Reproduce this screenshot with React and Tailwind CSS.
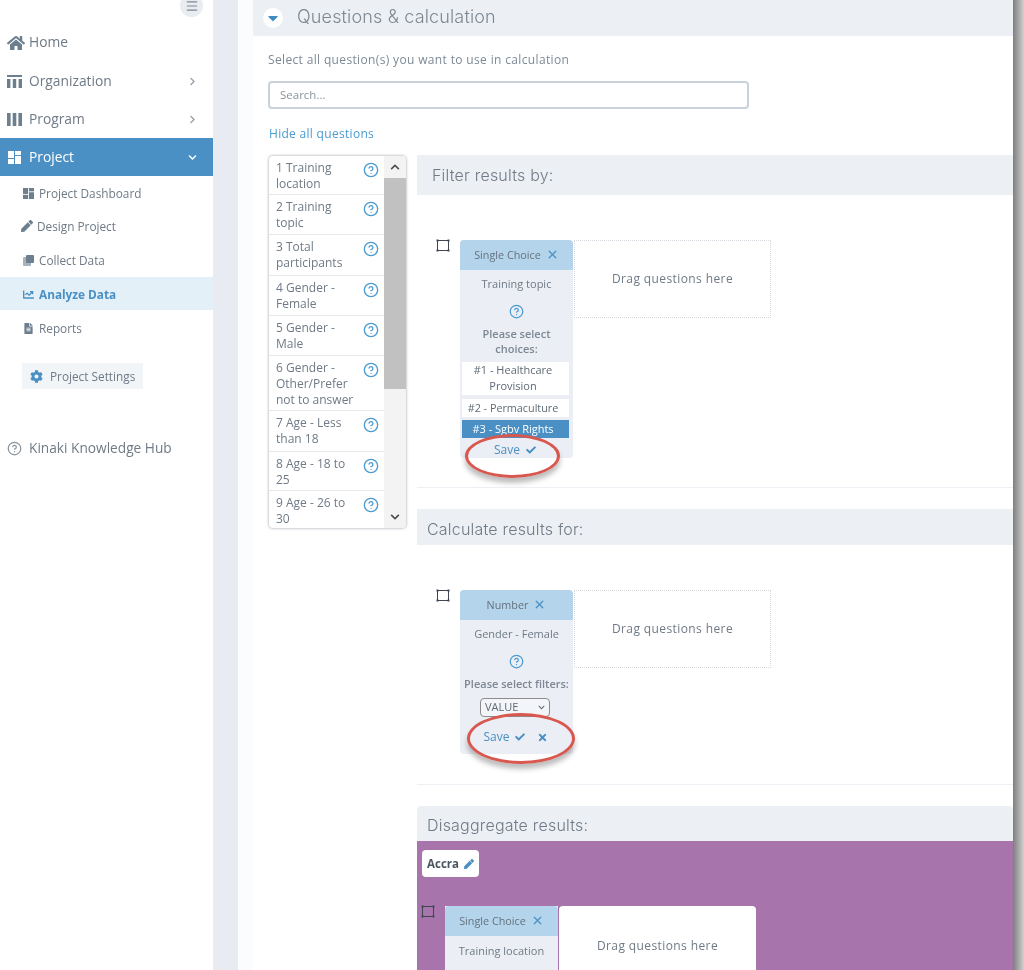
import React from 'react'
import { FaHome, FaPen, FaCog, FaCheck, FaTimes, FaChartLine, FaFileAlt, FaCaretDown, FaChevronRight, FaChevronDown, FaChevronUp } from 'react-icons/fa'
import { CircleHelp, X, Menu } from 'lucide-react'

function OrgIcon() {
  return (
    <svg width="15" height="13" viewBox="0 0 15 13" fill="currentColor">
      <rect x="0" y="0" width="15" height="2" />
      <rect x="0" y="4" width="3.4" height="9" />
      <rect x="5.8" y="4" width="3.4" height="9" />
      <rect x="11.6" y="4" width="3.4" height="9" />
    </svg>
  )
}

function ProgramIcon() {
  return (
    <svg width="15" height="13" viewBox="0 0 15 13" fill="currentColor">
      <rect x="0" y="0" width="3.6" height="13" />
      <rect x="5.7" y="0" width="3.6" height="13" />
      <rect x="11.4" y="0" width="3.6" height="13" />
    </svg>
  )
}

function TilesIcon({ size = 13 }) {
  return (
    <svg width={size} height={size} viewBox="0 0 13 13" fill="currentColor">
      <rect x="0" y="0" width="6" height="7" />
      <rect x="7" y="0" width="6" height="4" />
      <rect x="7" y="5" width="6" height="8" />
      <rect x="0" y="8" width="6" height="5" />
    </svg>
  )
}

function CollectIcon() {
  return (
    <svg width="11" height="11" viewBox="0 0 11 11" fill="currentColor">
      <rect x="0" y="2" width="8" height="9" rx="1" fillOpacity="0.6" />
      <rect x="3" y="0" width="8" height="8" rx="1" />
    </svg>
  )
}

function CornerIcon() {
  return (
    <svg width="14" height="13" viewBox="0 0 14 13" fill="none" className="-mt-px shrink-0 text-[#3f4650]">
      <rect x="1.5" y="1.5" width="11" height="10" stroke="currentColor" strokeWidth="1" />
      <rect x="0.5" y="0.5" width="2" height="2" fill="currentColor" />
      <rect x="11.5" y="0.5" width="2" height="2" fill="currentColor" />
      <rect x="0.5" y="10.5" width="2" height="2" fill="currentColor" />
      <rect x="11.5" y="10.5" width="2" height="2" fill="currentColor" />
    </svg>
  )
}

function NavRow({ icon, label, chevron }) {
  return (
    <div className="flex h-[38px] items-center pl-[7px] pr-4 pt-px text-[13.8px] text-[#6f7a86]">
      <span className="flex w-[22px] justify-start text-[#6d7f8e]">{icon}</span>
      <span className="flex-1">{label}</span>
      {chevron && <FaChevronRight className="text-[9px] text-[#9aa4ae]" />}
    </div>
  )
}

function SubRow({ icon, label, active, iconWidth = 'w-[16px]', className = 'pt-[2px]' }) {
  return (
    <div className={`flex h-[33.6px] items-center pl-[23px] text-[11.8px] ${className} ${active ? 'bg-[#e3f0f8] font-bold text-[#4a90c4]' : 'text-[#6f7a86]'}`}>
      <span className={`flex ${iconWidth} ${active ? 'text-[#4a90c4]' : 'text-[#6d7f8e]'}`}>{icon}</span>
      {label}
    </div>
  )
}

function Sidebar() {
  return (
    <aside className="relative w-[213px] shrink-0 bg-white">
      <div className="absolute -top-[6px] left-[180px] flex h-[23px] w-[23px] items-center justify-center rounded-full bg-[#e9edf2] text-[#7d8791]">
        <Menu size={14} />
      </div>
      <div className="h-[23px]" />
      <NavRow icon={<FaHome className="text-lg" />} label="Home" />
      <div className="h-px" />
      <NavRow icon={<OrgIcon />} label="Organization" chevron />
      <NavRow icon={<ProgramIcon />} label="Program" chevron />
      <div className="flex h-[38px] items-center bg-[#4a90c4] pl-[8px] pr-4 pt-px text-[13.8px] text-white">
        <span className="flex w-[21px]"><TilesIcon /></span>
        <span className="flex-1">Project</span>
        <FaChevronDown className="text-[9px]" />
      </div>
      <SubRow icon={<TilesIcon size={11} />} label="Project Dashboard" />
      <SubRow icon={<FaPen className="-ml-[2px] text-xs" />} label="Design Project" iconWidth="w-[14px]" className="pt-0" />
      <SubRow icon={<CollectIcon />} label="Collect Data" />
      <SubRow icon={<FaChartLine className="text-[11px]" />} label="Analyze Data" active />
      <SubRow icon={<FaFileAlt className="text-[11px]" />} label="Reports" className="pt-[3px]" />
      <div className="ml-[22px] mt-[19px] flex h-[26px] w-[121px] items-center gap-[7px] bg-[#f2f5f8] pl-2 pt-[2px] text-[11.8px] text-[#6f7a86]">
        <FaCog className="text-[13px] text-[#4a90c4]" />
        Project Settings
      </div>
      <div className="mt-[45px] flex h-[28px] items-center gap-[7px] pl-[7px] pt-px text-[13.7px] text-[#6f7a86]">
        <CircleHelp size={15} className="text-[#8a949e]" />
        Kinaki Knowledge Hub
      </div>
    </aside>
  )
}

const questions = [
  ['1 Training location', 39],
  ['2 Training topic', 40],
  ['3 Total participants', 41],
  ['4 Gender - Female', 40],
  ['5 Gender - Male', 40],
  ['6 Gender - Other/Prefer not to answer', 55],
  ['7 Age - Less than 18', 41],
  ['8 Age - 18 to 25', 39],
  ['9 Age - 26 to 30', 37],
]

function QuestionList() {
  return (
    <div className="mt-px flex h-[372px] w-[137px] shrink-0 overflow-hidden rounded-sm bg-white shadow-[0_0_3px_rgba(60,70,90,0.55)]">
      <div className="w-[115px] shrink-0">
        {questions.map(([label, height]) => (
          <div
            key={label}
            style={{ height }}
            className="flex items-start justify-between overflow-hidden border-b border-[#e6e8ec] pl-[7px] pr-[5px] pt-[4px] text-xs leading-[16px] text-[#6f7a86] last:border-b-0"
          >
            <span className="w-[82px]">{label}</span>
            <CircleHelp size={16} className="mt-[2px] shrink-0 text-[#4a9bd0]" />
          </div>
        ))}
      </div>
      <div className="flex w-[22px] flex-col items-center bg-[#f3f3f3]">
        <div className="flex h-[22px] w-full items-center justify-center text-[#4d4d4d]">
          <FaChevronUp className="text-[10px]" />
        </div>
        <div className="h-[211px] w-full bg-[#c1c1c1]" />
        <div className="flex-1" />
        <div className="flex h-[22px] w-full items-center justify-center text-[#4d4d4d]">
          <FaChevronDown className="text-[10px]" />
        </div>
      </div>
    </div>
  )
}

function CardHeader({ label }) {
  return (
    <div className="flex h-[29.5px] items-center justify-center gap-[5px] rounded-t-sm bg-[#b3d4ea] text-[10.8px] text-[#65727f]">
      {label}
      <X size={13} strokeWidth={2.4} className="text-[#4a90c4]" />
    </div>
  )
}

function RedRing({ className }) {
  return (
    <div className={`absolute rounded-[50%] border-[3px] border-[#d8584f] shadow-[0_5px_5px_rgba(90,90,90,0.4)] ${className}`} />
  )
}

function FilterCard() {
  return (
    <div className="relative h-[218px] w-[113px] shrink-0 rounded-sm bg-[#ebeef4] text-center text-[11px] text-[#6f7a86]">
      <CardHeader label="Single Choice" />
      <div className="mt-[6px] leading-[16px]">Training topic</div>
      <CircleHelp size={15} className="mx-auto mt-[12px] text-[#4a9bd0]" />
      <div className="mt-[7px] font-semibold leading-[15px] text-[#7d8894]">Please select<br />choices:</div>
      <div className="ml-[2px] mt-[6px] h-[33px] w-[107px] bg-white pr-[5px] leading-[16px] text-[#5f6a75]">#1 - Healthcare Provision</div>
      <div className="ml-[2px] mt-[4px] h-[18px] w-[107px] bg-white pr-[5px] text-[10.8px] leading-[18px] text-[#5f6a75]">#2 - Permaculture</div>
      <div className="ml-[2px] mt-[3px] h-[18px] w-[107px] bg-[#4a90c4] pr-[5px] leading-[18px] text-white">#3 - Sgbv Rights</div>
      <div className="mt-[4px] flex h-[16px] items-center justify-center gap-[6px] pr-[3px] text-xs text-[#4a90c4]">
        Save <FaCheck className="text-[10px]" />
      </div>
      <RedRing className="left-[5px] top-[194px] h-[44px] w-[95px]" />
    </div>
  )
}

function NumberCard() {
  return (
    <div className="relative h-[164px] w-[113px] shrink-0 rounded-sm bg-[#ebeef4] text-center text-[11px] text-[#6f7a86]">
      <CardHeader label="Number" />
      <div className="mt-[6px] leading-[16px]">Gender - Female</div>
      <CircleHelp size={15} className="mx-auto mt-[12px] text-[#4a9bd0]" />
      <div className="mt-[7px] whitespace-nowrap font-semibold leading-[15px] text-[#7d8894]">Please select filters:</div>
      <div className="ml-[20px] mt-[7.5px] flex h-[19px] w-[70px] items-center justify-between rounded border border-[#8c8c8c] bg-white/40 pl-[4px] pr-[4px] text-[#5f6a75]">
        VALUE <FaChevronDown className="text-[7px]" />
      </div>
      <div className="mt-[12px] flex h-[16px] items-center justify-center gap-[6px] pr-[1px] text-xs text-[#4a90c4]">
        Save <FaCheck className="text-[10px]" /> <FaTimes className="ml-[6px] text-[11px]" />
      </div>
      <RedRing className="left-[7px] top-[123px] h-[51px] w-[108px]" />
    </div>
  )
}

function DropBox({ solid }) {
  return (
    <div
      className={`h-[78px] w-[197px] shrink-0 text-center text-xs tracking-[0.4px] text-[#6f7a86] ${
        solid ? 'rounded-sm bg-white pt-[32px]' : 'border border-dotted border-[#d5d8dc] pt-[30px]'
      }`}
    >
      Drag questions here
    </div>
  )
}

function DropRow({ children, solid }) {
  return (
    <div className="flex items-start">
      <CornerIcon />
      <div className="ml-[10px] flex items-start gap-px">
        {children}
        <DropBox solid={solid} />
      </div>
    </div>
  )
}

const headingClass = "text-[16px] font-light tracking-[0.2px] text-[#6f7a86] font-['Inter',sans-serif]"

function Content() {
  return (
    <main className="w-[760px] shrink-0 bg-white">
      <div className="flex h-9 items-center bg-[#eceff4] pl-[10px]">
        <span className="flex h-5 w-5 items-center justify-center rounded-full bg-white text-[#3d8cc4]">
          <FaCaretDown className="text-base" />
        </span>
        <h1 className="ml-[14px] pb-[3px] text-[18px] font-light tracking-[0.15px] text-[#7d8791] font-['Inter',sans-serif]">Questions &amp; calculation</h1>
      </div>
      <div className="pl-[15px]">
        <p className="pt-[15px] text-xs leading-[18px] tracking-[0.35px] text-[#7d8a96]">Select all question(s) you want to use in calculation</p>
        <div className="mt-3 flex h-7 w-[481px] items-center rounded border-2 border-[#c9d1db] pl-[10px] text-[11.5px] text-[#8c949c]">Search...</div>
        <p className="ml-px mt-4 text-xs font-medium leading-[18px] tracking-[0.3px] text-[#4a9bd0]">Hide all questions</p>
        <div className="mt-3 flex">
          <div className="ml-px"><QuestionList /></div>
          <div className="ml-[11px] w-[596px]">
            <section className="border-b border-[#eceff4]">
              <div className={`flex h-10 items-center bg-[#eceff4] pl-[15px] ${headingClass}`}>Filter results by:</div>
              <div className="h-[292px] pl-[19px] pt-[45px]">
                <DropRow><FilterCard /></DropRow>
              </div>
            </section>
            <section className="mt-[21px] border-b border-[#eceff4]">
              <div className={`flex h-9 items-center bg-[#eceff4] pl-[10px] pt-[3px] ${headingClass}`}>Calculate results for:</div>
              <div className="h-[239px] pl-[19px] pt-[45px]">
                <DropRow><NumberCard /></DropRow>
              </div>
            </section>
            <section className="mt-[21px]">
              <div className={`flex h-[35px] items-center rounded-t-sm bg-[#eceff4] pl-[10px] pt-[3px] ${headingClass}`}>Disaggregate results:</div>
              <div className="h-[200px] bg-[#a775ab] pl-[4px] pt-[9px]">
                <div className="ml-px flex h-[27px] w-[57px] items-center justify-center gap-[5px] rounded-sm bg-white text-[11.5px] font-bold text-[#4a5560]">
                  Accra <FaPen className="text-[10px] text-[#4a90c4]" />
                </div>
                <div className="mt-[29px]">
                  <DropRow solid>
                    <div className="w-[113px] shrink-0 bg-[#ebeef4] pb-10 text-center text-[11px] text-[#6f7a86]">
                      <CardHeader label="Single Choice" />
                      <div className="mt-[7px] leading-[16px]">Training location</div>
                    </div>
                  </DropRow>
                </div>
              </div>
            </section>
          </div>
        </div>
      </div>
    </main>
  )
}

export default function App() {
  return (
    <div className="flex h-[970px] w-[1024px] overflow-hidden bg-white font-['Open_Sans',sans-serif] blur-[0.5px]">
      <Sidebar />
      <div className="w-[25px] shrink-0 bg-[#e8ebf1]" />
      <div className="w-[15px] shrink-0 bg-[#fbfcfd]" />
      <Content />
      <div className="w-[11px] shrink-0 bg-gradient-to-r from-[#7f7f7f] to-[#d2d2d2]" />
    </div>
  )
}
